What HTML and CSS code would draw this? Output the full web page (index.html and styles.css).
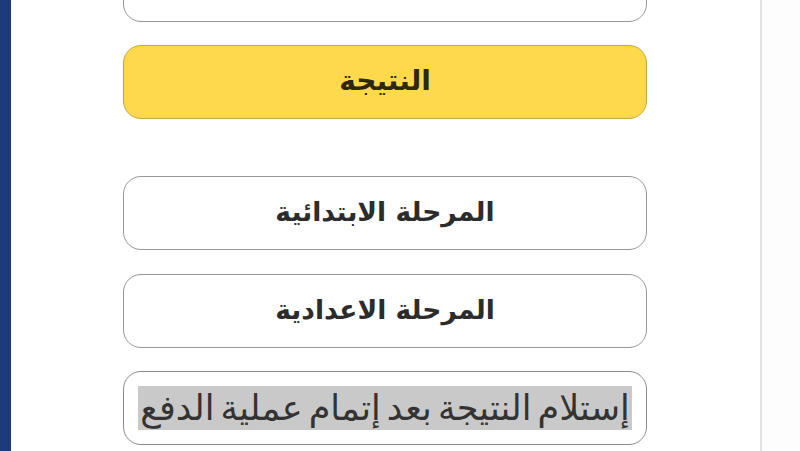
FILE: index.html
```html
<!DOCTYPE html>
<html lang="ar" dir="rtl">
<head>
<meta charset="utf-8">
<link rel="stylesheet" href="styles.css">
</head>
<body>
<div class="page">
  <div class="side-bar"></div>
  <main class="content">
    <div class="btn btn-top"></div>
    <div class="btn btn-yellow">النتيجة</div>
    <div class="btn btn-first">المرحلة الابتدائية</div>
    <div class="btn">المرحلة الاعدادية</div>
    <div class="btn btn-note"><span class="hl">إستلام النتيجة بعد إتمام عملية الدفع</span></div>
  </main>
  <div class="divider"></div>
  <div class="rest"></div>
</div>
</body>
</html>
```
FILE: styles.css
```css
html, body {
  margin: 0;
  padding: 0;
  background: #ffffff;
  height: 100%;
  overflow: hidden;
}
.page {
  direction: ltr;
  display: flex;
  height: 451px;
  width: 800px;
}
.side-bar {
  width: 11px;
  flex: none;
  background: #1d3a7b;
}
.content {
  width: 749px;
  flex: none;
  display: flex;
  flex-direction: column;
  align-items: flex-start;
  padding-left: 112px;
  box-sizing: border-box;
  margin-top: -52px;
}
.divider {
  width: 2px;
  flex: none;
  background: #e2e2e2;
}
.rest {
  flex: 1;
  background: #fdfdfd;
}
.btn {
  direction: rtl;
  width: 524px;
  height: 74px;
  box-sizing: border-box;
  border: 1.6px solid #979797;
  border-radius: 18px;
  background: #fff;
  display: flex;
  align-items: center;
  justify-content: center;
  font-family: "DejaVu Sans", "Noto Sans", sans-serif;
  font-size: 26.5px;
  font-weight: 600;
  color: #2c2c2c;
  margin-bottom: 23px;
  flex: none;
  padding-bottom: 4px;
}
.btn-yellow {
  background: #fdd94b;
  border-color: #c4a53f;
  margin-bottom: 57px;
  color: #2e2810;
  font-size: 28px;
}
.btn-first {
  margin-bottom: 24px;
}
.btn-note {
  font-size: 35px;
  font-weight: 500;
  color: #333;
  padding-bottom: 0;
  border-color: #8a8a8a;
}
.hl {
  background: #c9c9c9;
  padding: 2px 2px;
  word-spacing: -5px;
}
```
